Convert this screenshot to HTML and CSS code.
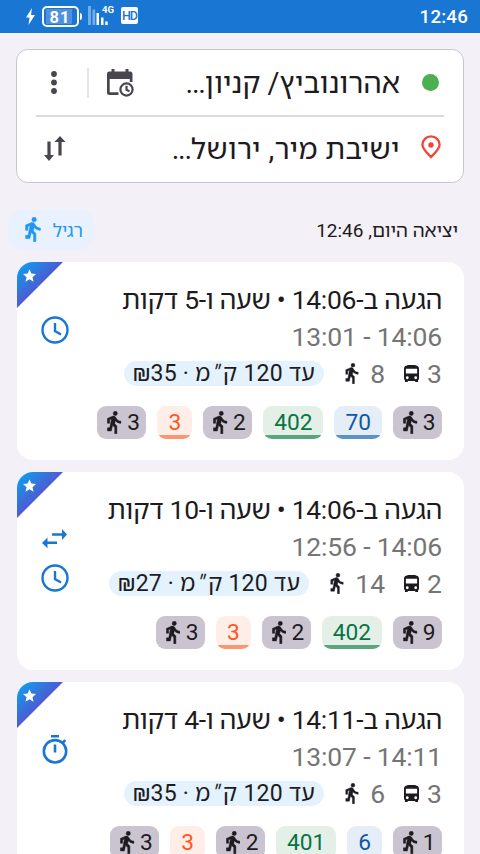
FILE: index.html
```html
<!DOCTYPE html>
<html lang="he" dir="rtl">
<head>
<meta charset="utf-8">
<title>מסלולים</title>
<link rel="stylesheet" href="styles.css">
</head>
<body>
<svg class="defs" aria-hidden="true">
  <symbol id="walk" viewBox="5.700 1.200 13.600 22.100"><path stroke-width=".5" d="M13.500 5.500a2 2 0 1 0 0-4 2 2 0 0 0 0 4zM9.900 19.400l1-4.400 2.100 2v6h2v-7.500l-2.100-2 .6-3C14.800 12 16.800 13 19 13v-2c-1.900 0-3.500-1-4.300-2.400l-1-1.600c-.4-.6-1-1-1.700-1-.3 0-.5.1-.8.1L6 8.300V13h2V9.600l1.800-.7L8.200 17.400H6v2.900h3.700z"/></symbol>
  <symbol id="bus" viewBox="4 2 16 18"><path fill-rule="evenodd" d="M4 16c0 .9.4 1.700 1 2.200V20c0 .6.4 1 1 1h1c.6 0 1-.4 1-1v-1h8v1c0 .6.4 1 1 1h1c.6 0 1-.4 1-1v-1.800c.6-.5 1-1.300 1-2.200V6c0-3.500-3.600-4-8-4s-8 .5-8 4zm3.500 1a1.500 1.500 0 1 1 0-3 1.500 1.500 0 0 1 0 3zm9 0a1.500 1.500 0 1 1 0-3 1.500 1.500 0 0 1 0 3zM18 11H6V6h12z"/></symbol>
  <symbol id="clock" viewBox="0 0 28 28"><circle cx="14" cy="14" r="12.500"/><path d="M14 7v8l6 3.500"/></symbol>
  <symbol id="timer" viewBox="0 0 28 30"><circle cx="14" cy="17.300" r="11.200"/><path d="M10 2.300h8M14 10.500v8M21.500 9l2.800-2.800"/></symbol>
  <symbol id="swap" viewBox="0 0 25 20"><path d="M10 4.300h10V0l5 5.500-5 5.500V6.800H10zM15 12.500H5.500V8.500L0 14l5.500 5.200V15H15z"/></symbol>
  <symbol id="star" viewBox="2 2 20 19"><path d="m12 17.300 6.200 3.700-1.600-7L22 9.200l-7.200-.6L12 2 9.200 8.600 2 9.200 7.500 14l-1.700 7z"/></symbol>
</svg>

<header class="status" dir="ltr">
  <svg class="bolt" viewBox="0 0 9 17"><path d="M6 0 0 9.500h3.500L2.500 17 9 7H5z"/></svg>
  <div class="battery"><span>81</span></div>
  <i class="battery-tip"></i>
  <svg class="signal" viewBox="0 0 20 19"><path class="dim" d="M0 0h3v19H0zM4.500 3.500h2.700V19H4.500z"/><path d="M8.500 7h2.500v12H8.500zM13 11.500h2.500V19H13zM17.200 15.500h2.500V19h-2.500z"/></svg>
  <span class="net">4G</span>
  <span class="hd">HD</span>
  <span class="time">12:46</span>
</header>

<section class="search">
  <div class="field">
    <i class="origin"></i>
    <span class="place from">אהרונוביץ/ קניון<span class="more">...</span></span>
    <svg class="calendar" viewBox="0 0 27 28"><path fill-rule="evenodd" d="M4.500 0h3v2.500h11V0h3v2.500H23a2.500 2.500 0 0 1 2.500 2.500v8h-2.700v-3H2.700v13.300h8.800v2.700H2.500A2.500 2.500 0 0 1 0 23.500V5a2.500 2.500 0 0 1 2.500-2.500h2z"/><circle cx="19.500" cy="20.500" r="6.100"/><path class="hand" d="M19.500 16.800v4l3 1.600"/></svg>
    <i class="divider"></i>
    <svg class="dots" viewBox="0 0 6 24"><circle cx="3" cy="3" r="2.900"/><circle cx="3" cy="11.500" r="2.900"/><circle cx="3" cy="20" r="2.900"/></svg>
  </div>
  <div class="field second">
    <svg class="pin" viewBox="0 0 20 24"><path d="M10 22C6 18 1.400 14 1.400 9.800a8.600 8.400 0 0 1 17.200 0C18.600 14 14 18 10 22z"/><circle cx="10" cy="10" r="2.700"/></svg>
    <span class="place to">ישיבת מיר, ירושל<span class="more">...</span></span>
    <svg class="sort" viewBox="0 0 22 25"><path d="M3.400 5.500h3.200V19H10l-5 6-5-6h3.400zM14.400 19.500h3.200V6H21.500L16 0l-5.500 6h3.900z"/></svg>
  </div>
</section>

<div class="bar">
  <span class="leaving">יציאה היום, 12:46</span>
  <span class="speed"><span>רגיל</span><svg><use href="#walk"/></svg></span>
</div>

<main>
  <article class="card">
    <div class="corner"><svg><use href="#star"/></svg></div>
    <div class="marks"><svg class="clock"><use href="#clock"/></svg></div>
    <h2>הגעה ב-14:06 • שעה ו-5 דקות</h2>
    <p class="span"><bdi dir="ltr">13:01 - 14:06</bdi></p>
    <div class="facts"><span>3</span><svg class="bus"><use href="#bus"/></svg><span>8</span><svg class="walk"><use href="#walk"/></svg><span class="fare">עד 120 ק<span class="prime">″</span>מ · <bdi>35</bdi>&rlm;<bdi>₪</bdi></span></div>
    <div class="legs"><span class="leg foot">3<svg><use href="#walk"/></svg></span><span class="leg blue">70</span><span class="leg green">402</span><span class="leg foot">2<svg><use href="#walk"/></svg></span><span class="leg orange">3</span><span class="leg foot">3<svg><use href="#walk"/></svg></span></div>
  </article>
  <article class="card">
    <div class="corner"><svg><use href="#star"/></svg></div>
    <div class="marks"><svg class="swap"><use href="#swap"/></svg><svg class="clock"><use href="#clock"/></svg></div>
    <h2>הגעה ב-14:06 • שעה ו-10 דקות</h2>
    <p class="span"><bdi dir="ltr">12:56 - 14:06</bdi></p>
    <div class="facts"><span>2</span><svg class="bus"><use href="#bus"/></svg><span>14</span><svg class="walk"><use href="#walk"/></svg><span class="fare">עד 120 ק<span class="prime">″</span>מ · <bdi>27</bdi>&rlm;<bdi>₪</bdi></span></div>
    <div class="legs"><span class="leg foot">9<svg><use href="#walk"/></svg></span><span class="leg green">402</span><span class="leg foot">2<svg><use href="#walk"/></svg></span><span class="leg orange">3</span><span class="leg foot">3<svg><use href="#walk"/></svg></span></div>
  </article>
  <article class="card">
    <div class="corner"><svg><use href="#star"/></svg></div>
    <div class="marks"><svg class="timer"><use href="#timer"/></svg></div>
    <h2>הגעה ב-14:11 • שעה ו-4 דקות</h2>
    <p class="span"><bdi dir="ltr">13:07 - 14:11</bdi></p>
    <div class="facts"><span>3</span><svg class="bus"><use href="#bus"/></svg><span>6</span><svg class="walk"><use href="#walk"/></svg><span class="fare">עד 120 ק<span class="prime">″</span>מ · <bdi>35</bdi>&rlm;<bdi>₪</bdi></span></div>
    <div class="legs"><span class="leg foot">1<svg><use href="#walk"/></svg></span><span class="leg blue">6</span><span class="leg green">401</span><span class="leg foot">2<svg><use href="#walk"/></svg></span><span class="leg orange">3</span><span class="leg foot">3<svg><use href="#walk"/></svg></span></div>
  </article>
</main>
</body>
</html>
```
FILE: styles.css
```css
* { box-sizing: border-box; }
html, body { height: 854px; overflow: hidden; }
body {
  margin: 0;
  background: #f3f0f7;
  color: #1d1b20;
  font-family: Roboto, "Noto Sans Hebrew", "Open Sans", "Noto Sans", sans-serif;
}
svg { display: block; flex: none; }
.defs { position: absolute; width: 0; height: 0; }

.status { height: 33px; background: #1976d2; color: #fff; display: flex; align-items: flex-start; padding: 0 12px 0 26px; }
.bolt { width: 9px; height: 17px; margin-top: 8px; fill: #fff; }
.battery { width: 37px; height: 21px; margin: 6px 0 0 7px; border: 2px solid #fff; border-radius: 5px; padding: 1px; }
.battery span { display: block; width: 26px; height: 15px; margin-left: 1px; background: #4f91da; font: bold 16.500px/17px Roboto, sans-serif; letter-spacing: 1px; text-align: center; padding-left: 2px; }
.battery-tip { width: 2px; height: 7px; margin: 13px 0 0 1px; background: #fff; border-radius: 0 2px 2px 0; }
.signal { width: 20px; height: 19px; margin: 6px 0 0 6px; fill: #fff; }
.signal .dim { opacity: .4; }
.net { width: 12px; font: bold 9.500px/10px Roboto, sans-serif; margin: 5px 0 0 -6px; }
.hd { width: 17px; height: 17px; margin: 7px 0 0 7px; padding-left: 1px; background: #fff; color: #1976d2; border-radius: 2px; font: 500 12.500px/18px Roboto, sans-serif; letter-spacing: -1px; white-space: nowrap; }
.time { margin-left: auto; font-size: 18.700px; line-height: 35px; font-weight: 500; letter-spacing: .2px; }

.search { height: 134px; margin: 16px 16px 0; background: #fff; border: 1.500px solid #cac5d2; border-radius: 12px; padding: 0 19px; }
.field { height: 65px; display: flex; align-items: center; padding-right: 5px; }
.field.second { height: 67px; border-top: 2px solid #dcd7e0; }
.origin { width: 17px; height: 17px; margin-left: 22px; border-radius: 50%; background: #4caf50; }
.place { font-size: 29px; line-height: 40px; white-space: nowrap; }
.from { padding-top: 1px; }
.to { letter-spacing: .35px; padding-bottom: 2px; }
.more { letter-spacing: -1.200px; }
.calendar { width: 27px; height: 28px; margin-right: auto; fill: #49454f; }
.calendar circle, .calendar .hand { fill: none; stroke: #49454f; stroke-width: 2.200; }
.divider { width: 2px; height: 30px; margin: 0 18px 0 30px; background: #e5e2ea; }
.dots { width: 6px; height: 24px; margin-left: 15px; fill: #49454f; }
.pin { width: 20px; height: 24px; margin: 0 -2px 5px 21px; fill: none; stroke: #f44336; stroke-width: 2.300; }
.pin circle { fill: #f44336; stroke: none; }
.sort { width: 22px; height: 25px; margin: 0 auto 3px 8px; fill: #49454f; }

.bar { height: 41px; margin: 26px 22px 12px 8px; display: flex; align-items: center; justify-content: space-between; }
.leaving { font-size: 19px; }
.speed { width: 86px; height: 41px; border-radius: 16px; background: #e8f1fd; color: #2196f3; font-size: 18px; display: flex; align-items: center; justify-content: space-between; padding: 0 11px 0 17px; }
.speed svg { width: 16px; height: 25px; fill: #2196f3; stroke: #2196f3; }

.card { position: relative; width: 447px; height: 198px; margin: 0 16px 12px 17px; padding: 18px 22px 0 0; background: #fff; border-radius: 16px; overflow: hidden; }
.corner { position: absolute; left: 0; top: 0; width: 46px; height: 46px; background: linear-gradient(135deg, #03a9f4, #5058d0 52%); clip-path: polygon(0 0, 100% 0, 0 100%); }
.corner svg { width: 13px; height: 13px; fill: #fff; position: absolute; left: 6px; top: 7px; }
.marks { position: absolute; left: 23.500px; top: 54px; width: 28px; display: flex; flex-direction: column; align-items: center; }
.clock { width: 28px; height: 28px; fill: none; stroke: #1976d2; stroke-width: 2.400; }
.timer { width: 28px; height: 30px; margin-top: -2px; fill: none; stroke: #1976d2; stroke-width: 2.600; }
.swap { width: 25px; height: 20px; margin: 3px 0 15px; fill: #1976d2; }
h2 { margin: 0; font-size: 26.500px; line-height: 40px; font-weight: 400; letter-spacing: -.3px; white-space: nowrap; }
.span { margin: 0; font-size: 26.500px; line-height: 34px; letter-spacing: -.15px; color: #757575; }
.facts { height: 39px; display: flex; align-items: center; font-size: 26.500px; color: #757575; }
.facts .bus { width: 15px; height: 17px; margin: 0 8px 0 19px; fill: #1d1b20; }
.facts .walk { width: 14px; height: 21px; margin: 0 11px 0 21px; fill: #1d1b20; stroke: #1d1b20; }
.fare { height: 25px; border-radius: 13px; padding: 0 9px; background: #e3f2fd; color: #1d1b20; font-size: 23px; line-height: 25px; letter-spacing: .2px; white-space: nowrap; }
.prime { display: inline-block; padding: 0 2.500px; line-height: 20px; transform: skewX(-14deg); }
.legs { display: flex; gap: 11px; margin-top: 13px; }
.leg { height: 33px; border-radius: 9px; padding: 0 11px; font-size: 22.700px; line-height: 34px; }
.foot { width: 49px; display: flex; justify-content: space-between; align-items: center; padding: 0 6.500px 0 10px; background: #cac4d0; }
.foot svg { width: 14.500px; height: 23px; fill: #1d1b20; stroke: #1d1b20; }
.blue { background: linear-gradient(#e5edf6 29px, #5b93c8 29px); color: #0d57a8; }
.green { background: linear-gradient(#e4efe8 29px, #5aa580 29px); color: #087443; }
.orange { background: linear-gradient(#ffede7 29px, #ff9470 29px); color: #ff5722; }
```
